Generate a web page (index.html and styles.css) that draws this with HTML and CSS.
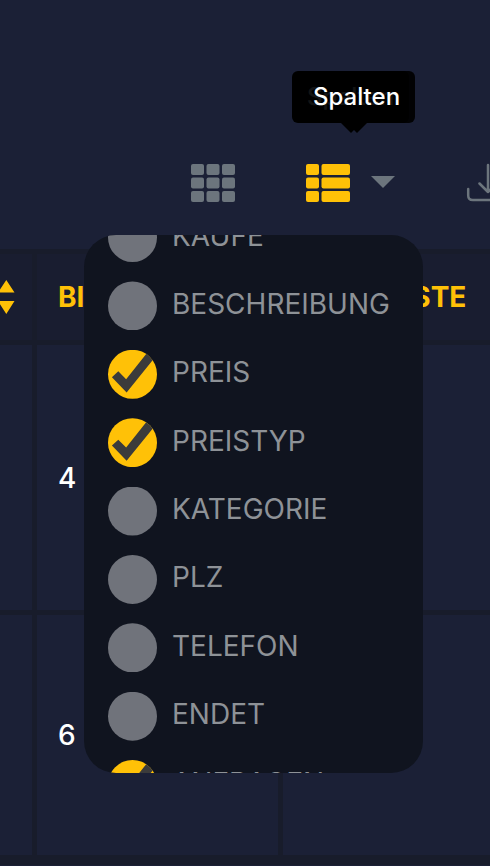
FILE: index.html
```html
<!DOCTYPE html>
<html lang="de">
<head>
<meta charset="utf-8">
<meta name="viewport" content="width=device-width, initial-scale=1">
<title>Spalten</title>
<link rel="stylesheet" href="styles.css">
</head>
<body>
<header class="toolbar">
  <button class="tool" type="button" aria-label="Kacheln">
    <svg width="44" height="38" viewBox="0 0 44 38" fill="currentColor">
      <rect x="0" y="0" width="13" height="11" rx="2"/><rect x="15.5" y="0" width="13" height="11" rx="2"/><rect x="31" y="0" width="13" height="11" rx="2"/>
      <rect x="0" y="13.5" width="13" height="11" rx="2"/><rect x="15.5" y="13.5" width="13" height="11" rx="2"/><rect x="31" y="13.5" width="13" height="11" rx="2"/>
      <rect x="0" y="27" width="13" height="11" rx="2"/><rect x="15.5" y="27" width="13" height="11" rx="2"/><rect x="31" y="27" width="13" height="11" rx="2"/>
    </svg>
  </button>
  <div class="columns-tool">
    <button class="tool tool-active" type="button" aria-label="Liste">
      <svg width="44" height="38" viewBox="0 0 44 38" fill="currentColor">
        <rect x="0" y="0" width="13" height="11" rx="2"/><rect x="15.5" y="0" width="28.5" height="11" rx="2"/>
        <rect x="0" y="13.5" width="13" height="11" rx="2"/><rect x="15.5" y="13.5" width="28.5" height="11" rx="2"/>
        <rect x="0" y="27" width="13" height="11" rx="2"/><rect x="15.5" y="27" width="28.5" height="11" rx="2"/>
      </svg>
    </button>
    <button class="tool" type="button" aria-label="Spalten">
      <svg width="24" height="14" viewBox="0 0 24 14" fill="currentColor"><path d="M0 0H24L12 12Z"/></svg>
    </button>
    <div class="tooltip tooltip-fading" aria-hidden="true">Spalten</div>
    <div class="tooltip" role="tooltip">Spalten</div>
    <div class="menu">
      <div class="menu-list">
        <label class="option"><input type="checkbox"><span>KÄUFE</span></label>
        <label class="option"><input type="checkbox"><span>BESCHREIBUNG</span></label>
        <label class="option"><input type="checkbox" checked><span>PREIS</span></label>
        <label class="option"><input type="checkbox" checked><span>PREISTYP</span></label>
        <label class="option"><input type="checkbox"><span>KATEGORIE</span></label>
        <label class="option"><input type="checkbox"><span>PLZ</span></label>
        <label class="option"><input type="checkbox"><span>TELEFON</span></label>
        <label class="option"><input type="checkbox"><span>ENDET</span></label>
        <label class="option"><input type="checkbox" checked><span>ANFRAGEN</span></label>
      </div>
    </div>
  </div>
  <button class="tool" type="button" aria-label="Herunterladen">
    <svg width="42" height="38" viewBox="0 0 42 38" fill="none" stroke="currentColor" stroke-width="2.5" stroke-linecap="round" stroke-linejoin="round">
      <path d="M2.200 25V31.500Q2.200 36 6.700 36H37.300Q41.800 36 41.800 31.500V25M22 1V28M13.500 19.500L22 28L30.500 19.500"/>
    </svg>
  </button>
</header>
<main>
  <table class="grid">
    <thead>
      <tr>
        <th class="col-sort"><button class="sort" type="button" aria-label="Sortieren"><svg width="15" height="34" viewBox="0 0 15 34" fill="currentColor"><path d="M6.300 0L14.500 12.500H-2ZM-2 21H14.500L6.300 34Z"/></svg></button></th>
        <th class="col-images">BILDER</th>
        <th>MERKLISTE</th>
      </tr>
    </thead>
    <tbody>
      <tr class="row-tall"><td></td><td>4</td><td></td></tr>
      <tr class="row"><td></td><td>6</td><td></td></tr>
      <tr><td></td><td></td><td></td></tr>
    </tbody>
  </table>
</main>
</body>
</html>
```
FILE: styles.css
```css
* {
  box-sizing: border-box;
}

body {
  margin: 0;
  min-height: 100vh;
  overflow: hidden;
  background: #1b2036;
  color: #fff;
  font-family: Inter, "Liberation Sans", sans-serif;
  font-size: 28px;
  line-height: 34px;
}

button {
  padding: 0;
  border: 0;
  background: none;
  color: inherit;
  font: inherit;
  cursor: pointer;
}

svg {
  display: block;
  overflow: visible;
}

.toolbar {
  display: flex;
  align-items: center;
  gap: 71px;
  height: 249px;
  padding: 117px 0 0 191px;
}

.tool {
  display: flex;
  flex: none;
  color: #6c757d;
}

.tool-active {
  color: #ffc107;
}

.columns-tool {
  position: relative;
  display: flex;
  flex: none;
  align-items: center;
  gap: 21px;
}

.tooltip {
  position: absolute;
  left: -8px;
  bottom: 79px;
  padding: 9px 15px;
  border-radius: 6px;
  background: rgba(0, 0, 0, 0.92);
  font-size: 24px;
  font-weight: 500;
}

.tooltip::after {
  content: "";
  position: absolute;
  top: 100%;
  left: 50%;
  margin-left: -10px;
  border: 10px solid transparent;
  border-top-color: #000;
  border-bottom: 0;
}

.tooltip-fading {
  left: -14px;
  background: #000;
}

.menu {
  position: absolute;
  z-index: 1;
  top: 71px;
  left: -222px;
  width: 339px;
  height: 538px;
  overflow: hidden;
  border-radius: 32px;
  background: #10141f;
}

.menu-list {
  display: flex;
  flex-direction: column;
  justify-content: space-between;
  height: 596px;
  margin-top: -22px;
  padding: 0 24px;
}

.option {
  display: flex;
  align-items: center;
  gap: 15px;
  color: #8e9297;
}

.option span {
  padding-bottom: 4px;
}

.option input {
  flex: none;
  appearance: none;
  width: 49px;
  height: 49px;
  margin: 0;
  background: #70737b;
  clip-path: circle(50%);
}

.option input:checked {
  background: #ffc107;
}

.option input:checked::before {
  content: "";
  display: block;
  height: 100%;
  background: #3b3b3b;
  clip-path: polygon(8% 56%, 21% 44%, 37% 60%, 84% 1%, 98% 13%, 38% 87%);
}

.grid {
  width: 100%;
  border-spacing: 0;
  table-layout: fixed;
}

.grid th,
.grid td {
  padding: 0 24px 0 21px;
  border: 0 solid #181c2b;
  border-width: 0 5px 5px 0;
  text-align: left;
  font-weight: 500;
}

.grid th:last-child,
.grid td:last-child {
  padding-left: 24px;
  border-right: 0;
}

.grid th {
  height: 96px;
  border-top-width: 5px;
  background: #191d30;
  background-clip: padding-box;
  color: #ffc107;
  font-weight: 700;
}

.grid .col-sort {
  width: 37px;
  padding: 0;
}

.col-images {
  width: 246px;
}

.sort {
  display: block;
}

.row-tall td {
  height: 270px;
}

.row td {
  height: 245px;
}
```
